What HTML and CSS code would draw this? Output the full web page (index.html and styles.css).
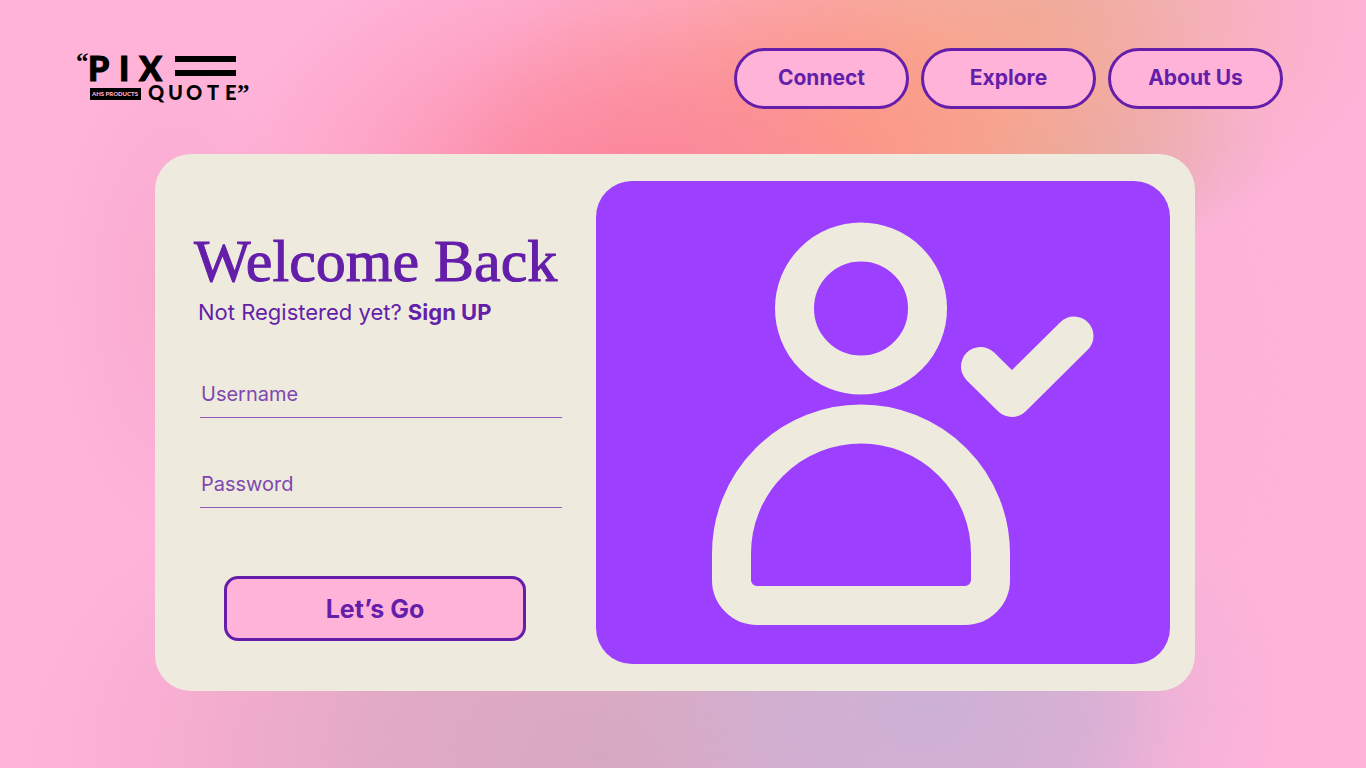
FILE: index.html
```html
<!DOCTYPE html>
<html lang="en">
<head>
<meta charset="utf-8">
<meta name="viewport" content="width=device-width, initial-scale=1">
<title>Pix Quote – Welcome Back</title>
<link rel="stylesheet" href="styles.css">
</head>
<body>
<svg class="grain" aria-hidden="true">
  <filter id="noise" x="0" y="0" width="100%" height="100%">
    <feTurbulence type="fractalNoise" baseFrequency="0.5" numOctaves="2" seed="4"/>
    <feColorMatrix type="saturate" values="0.5"/>
  </filter>
  <rect width="100%" height="100%" filter="url(#noise)"/>
</svg>
<header class="header">
  <a class="logo" href="#" aria-label="Pix Quote home">
    <svg width="172" height="55" viewBox="77 51 172 55">
      <g class="logo-text">
        <text x="76" y="70" class="logo-mark">“</text>
        <text x="88" y="81" class="logo-big">P</text>
        <text x="119" y="81" class="logo-big">I</text>
        <text x="139" y="81" class="logo-big">X</text>
        <rect x="175" y="56" width="61" height="6"/>
        <rect x="175" y="70" width="61" height="6"/>
        <rect x="90" y="88" width="51" height="12"/>
        <text x="115" y="96" class="logo-tag">AHS PRODUCTS</text>
        <text x="148" y="100" class="logo-small">Q</text>
        <text x="168" y="100" class="logo-small">U</text>
        <text x="186" y="100" class="logo-small">O</text>
        <text x="207" y="100" class="logo-small">T</text>
        <text x="225" y="100" class="logo-small">E</text>
        <text x="237" y="102" class="logo-mark">”</text>
      </g>
    </svg>
  </a>
  <nav class="nav">
    <a class="pill" href="#">Connect</a>
    <a class="pill" href="#">Explore</a>
    <a class="pill" href="#">About Us</a>
  </nav>
</header>
<main class="main">
  <section class="card">
    <form class="form">
      <h1 class="title">Welcome Back</h1>
      <p class="subtitle">Not Registered yet? <a href="#">Sign UP</a></p>
      <input class="field" type="text" placeholder="Username" aria-label="Username">
      <input class="field" type="password" placeholder="Password" aria-label="Password">
      <button class="submit" type="submit">Let’s Go</button>
    </form>
    <div class="panel">
      <svg class="user" viewBox="0 0 574 483" aria-hidden="true">
        <g transform="translate(-596 -181)">
          <circle cx="861" cy="308.500" r="66.500"/>
          <path d="M731.500 553.500a129.500 129.500 0 0 1 259 0V580a25.500 25.500 0 0 1-25.500 25.500H757a25.500 25.500 0 0 1-25.500-25.500z"/>
          <path d="M980.500 366.500 1012 397.500 1074 336"/>
        </g>
      </svg>
    </div>
  </section>
</main>
</body>
</html>
```
FILE: styles.css
```css
* {
  box-sizing: border-box;
}

body {
  --purple: #641eaa;
  --pink: #ffb3d9;
  --cream: #eeebde;
  position: relative;
  margin: 0;
  min-height: 100vh;
  color: var(--purple);
  font-family: Inter, "Open Sans", sans-serif;
  background:
    radial-gradient(ellipse 30% 36% at 46% 26%, #ff7f98 0%, #ff7f98aa 35%, #ff7f9840 68%, #ff7f9800 100%),
    radial-gradient(ellipse 28% 34% at 62% 18%, #ff9f7c 0%, #ff9f7cbb 35%, #ff9f7c44 70%, #ff9f7c00 100%),
    radial-gradient(ellipse 26% 30% at 76% 2%, #eeaea0 0%, #eeaea0aa 40%, #eeaea044 70%, #eeaea000 100%),
    radial-gradient(ellipse 16% 14% at 78% 20%, #dcb0b8 0%, #dcb0b888 45%, #dcb0b800 100%),
    radial-gradient(ellipse 26% 34% at 68% 92%, #cdb0d6 0%, #cdb0d6bb 45%, #cdb0d633 75%, #cdb0d600 100%),
    radial-gradient(ellipse 42% 44% at 44% 98%, #d8a8c0 0%, #dba7c0cc 40%, #e5a3c066 70%, #e5a3c000 100%),
    radial-gradient(ellipse 9% 32% at 13% 38%, #f5a5c8aa 0%, #f5a5c855 50%, #f5a5c800 100%),
    var(--pink);
}

.grain {
  position: absolute;
  inset: 0;
  width: 100%;
  height: 100%;
  opacity: 0.12;
  mask-image: radial-gradient(ellipse 45% 75% at 56% 50%, #000 40%, transparent 100%);
}

.header {
  position: relative;
  display: flex;
  align-items: center;
  justify-content: space-between;
  padding: 48px 83px 45px 77px;
}

.logo svg {
  display: block;
  overflow: visible;
}

.logo-text {
  fill: #000;
  font-family: Lato, sans-serif;
  font-weight: 900;
}

.logo-big {
  font-size: 34px;
  stroke: #000;
  stroke-width: 1px;
}

.logo-small {
  font-size: 20px;
}

.logo-mark {
  font-family: "Liberation Serif", serif;
  font-size: 25px;
  font-weight: 700;
}

.logo-tag {
  fill: var(--pink);
  font-size: 6px;
  text-anchor: middle;
}

.nav {
  display: flex;
  gap: 12px;
}

.pill {
  display: flex;
  align-items: center;
  justify-content: center;
  width: 175px;
  height: 61px;
  padding-bottom: 2px;
  border: 3px solid var(--purple);
  border-radius: 31px;
  background: var(--pink);
  color: var(--purple);
  font-size: 21px;
  font-weight: 700;
  text-decoration: none;
}

.main {
  position: relative;
  padding: 0 171px 77px 155px;
}

.card {
  display: grid;
  grid-template-columns: 362fr 574fr;
  gap: 34px;
  padding: 27px 25px 27px 45px;
  border-radius: 36px;
  background: var(--cream);
}

.form {
  display: flex;
  flex-direction: column;
  padding-top: 44px;
}

.title {
  margin: 0 0 0 -6px;
  font-family: "Liberation Serif", serif;
  font-size: 60px;
  font-weight: 400;
  line-height: 72px;
  white-space: nowrap;
  -webkit-text-stroke: 1px var(--purple);
}

.subtitle {
  margin: 0 0 43px -2px;
  font-size: 22px;
  line-height: 30px;
}

.subtitle a {
  color: inherit;
  font-weight: 700;
  text-decoration: none;
}

.field {
  width: 100%;
  height: 48px;
  margin-bottom: 42px;
  padding: 0 1px;
  border: 0;
  border-bottom: 1px solid #8e58bd;
  background: transparent;
  color: var(--purple);
  font: 400 20px/30px Inter, sans-serif;
}

.field::placeholder {
  color: #7e48b0;
  opacity: 1;
}

.submit {
  width: 302px;
  height: 65px;
  margin: 26px 0 0 24px;
  border: 3px solid var(--purple);
  border-radius: 14px;
  background: var(--pink);
  color: var(--purple);
  font: 700 25px/32px Inter, sans-serif;
}

.panel {
  display: flex;
  border-radius: 36px;
  background: #9c3fff;
}

.user {
  width: 100%;
  fill: none;
  stroke: var(--cream);
  stroke-width: 39;
  stroke-linecap: round;
  stroke-linejoin: round;
}
```
